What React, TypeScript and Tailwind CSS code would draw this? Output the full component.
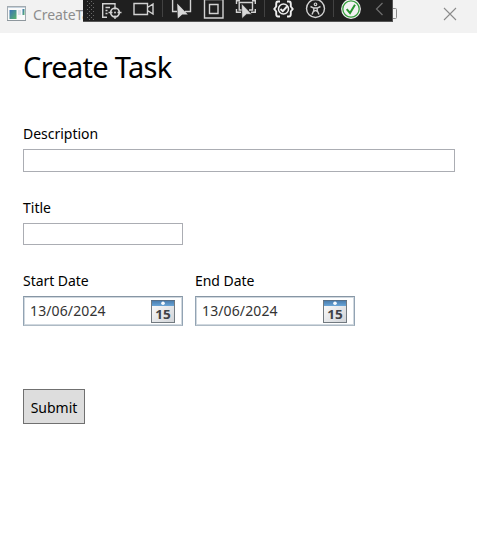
import React from "react";

const stroke = { fill: "none", stroke: "#d2d2d2", strokeWidth: 1.4 };

function Grip() {
  const dots: React.ReactNode[] = [];
  for (let row = 0; row < 5; row++) {
    for (let col = 0; col < 2; col++) {
      dots.push(
        <rect key={`a${row}-${col}`} x={col * 4} y={row * 4 + 1} width="1" height="1" fill="#6a6a6a" />,
        <rect key={`b${row}-${col}`} x={col * 4 + 2} y={row * 4 + 3} width="1" height="1" fill="#6a6a6a" />,
      );
    }
  }
  return <svg className="ml-1 mr-[3px] h-[22px] w-2 shrink-0" viewBox="0 0 8 22">{dots}</svg>;
}

function Separator() {
  return <span className="h-[17px] w-px shrink-0 self-start bg-[#424242]" />;
}

function TreeTargetIcon() {
  return (
    <svg className="h-[22px] w-6 shrink-0" viewBox="0 0 24 22" {...stroke}>
      <path d="M4.7 18V3M4 3.7H17V5.5M7.5 7.5H12M7.5 10.5H9.5M7.5 13.5H9.5M4 17.3H9" />
      <circle cx="17" cy="12.5" r="4.3" strokeWidth="1.7" />
      <path d="M17 5.5v4M17 15.5v3.5M10.5 12.5h4M19.5 12.5h4" />
      <circle cx="17" cy="12.5" r="1" fill="#d2d2d2" stroke="none" />
    </svg>
  );
}

function CameraIcon() {
  return (
    <svg className="ml-[10px] h-[22px] w-6 shrink-0" viewBox="0 0 24 22" {...stroke}>
      <path d="M2 3.5h13.5v11H2zM15.5 7.5L21 4v10L15.5 10.5" />
    </svg>
  );
}

function PointerIcon() {
  return (
    <svg className="ml-[7px] h-[22px] w-6 shrink-0" viewBox="0 0 24 22" {...stroke}>
      <path d="M7 11.5H2.6V0M20.5 0V11.5H15" />
      <path d="M7.2 3.6L17.8 14.5H12.2L7.8 18.5z" fill="#d8d8d8" stroke="none" />
    </svg>
  );
}

function BoundsIcon() {
  return (
    <svg className="ml-2 h-[22px] w-6 shrink-0" viewBox="0 0 24 22" {...stroke}>
      <path d="M2.5 -.5h18.5v18.5h-18.5zM7.5 4.5h8.5v9h-8.5z" />
    </svg>
  );
}

function FramePointerIcon() {
  return (
    <svg className="ml-2 h-[22px] w-6 shrink-0" viewBox="0 0 24 22" {...stroke}>
      <path d="M2.5 4V.7H6M18 .7h3.3V4M2.5 9v3.2H7M21.3 9v3.2H17M8 10H5.2V2.5H18.5V10H15" />
      <path d="M7.5 3.6L17.8 14.3H12.5L8 18.5z" fill="#d8d8d8" stroke="#1f1f1f" strokeWidth=".5" />
    </svg>
  );
}

function BracesCheckIcon() {
  return (
    <svg className="ml-[7px] h-[22px] w-6 shrink-0" viewBox="0 0 24 22" {...stroke} stroke="#eeeeee">
      <path d="M8 1.5H6Q4.2 1.5 4.2 4V6.5L2.3 9L4.2 11.5V14Q4.2 16.5 6 16.5H8M15 1.5H17Q18.8 1.5 18.8 4V6.5L20.7 9L18.8 11.5V14Q18.8 16.5 17 16.5H15" strokeWidth="1.9" />
      <circle cx="11.5" cy="9" r="5" strokeWidth="1.5" />
      <path d="M8.5 9L10.8 11.2L15 6.5" strokeWidth="1.9" />
    </svg>
  );
}

function AccessibilityIcon() {
  return (
    <svg className="ml-2 h-[22px] w-6 shrink-0" viewBox="0 0 24 22" {...stroke}>
      <circle cx="11.5" cy="8.5" r="9" strokeWidth="1.4" />
      <circle cx="11.5" cy="4.3" r="1.3" strokeWidth="1.2" />
      <path d="M6.5 6.5L9.8 8.1V10.5L8 14.5M16.5 6.5L13.2 8.1V10.5L15 14.5M9.8 8H13.2M9.7 11.5L11.5 10.5L13.3 11.5" strokeWidth="1.4" />
    </svg>
  );
}

function SuccessIcon() {
  return (
    <svg className="ml-[5px] h-[22px] w-6 shrink-0" viewBox="0 0 24 22" fill="none">
      <circle cx="12" cy="9" r="9.9" fill="#f2f2f2" />
      <circle cx="12" cy="9" r="8.2" stroke="#379e3d" strokeWidth="1.3" />
      <path d="M7.7 9.2L11 13L16 4.8" stroke="#27952e" strokeWidth="2" />
    </svg>
  );
}

function DebugToolbar() {
  return (
    <div className="absolute left-[83px] top-0 flex h-[22px] w-[310px] items-start overflow-hidden border-b border-r border-[#555] bg-[#1f1f1f]">
      <Grip />
      <TreeTargetIcon />
      <CameraIcon />
      <span className="w-[6px] shrink-0" />
      <Separator />
      <PointerIcon />
      <BoundsIcon />
      <FramePointerIcon />
      <span className="w-[6px] shrink-0" />
      <Separator />
      <BracesCheckIcon />
      <AccessibilityIcon />
      <span className="w-[5px] shrink-0" />
      <Separator />
      <SuccessIcon />
      <svg className="ml-[11px] h-[22px] w-3 shrink-0" viewBox="0 0 12 22" fill="none" stroke="#707070" strokeWidth="1.2">
        <path d="M8.5 3L2.5 9L8.5 15" />
      </svg>
    </div>
  );
}

function TitleBar() {
  return (
    <header className="relative flex h-[33px] items-start overflow-hidden bg-[#f2f2f2]">
      <svg className="ml-[7px] mt-[6px] h-4 w-[19px] shrink-0" viewBox="0 0 19 16">
        <defs>
          <linearGradient id="appPane" x2="1" y2="1">
            <stop stopColor="#3c72b8" />
            <stop offset="1" stopColor="#58b56a" />
          </linearGradient>
        </defs>
        <rect x=".5" y=".5" width="18" height="14" fill="#fafafa" stroke="#a3abb1" />
        <path d="M1 1.5H18" stroke="#c4d1dc" />
        <rect x="2.5" y="4" width="7" height="9" fill="url(#appPane)" />
        <rect x="11" y="4" width="3" height="5" fill="#dce3ea" />
        <rect x="15.5" y="3" width="2" height="6" fill="url(#appPane)" />
        <path d="M0 14.5H19" stroke="#8e979d" />
      </svg>
      <span className="ml-[7px] mt-[5px] whitespace-nowrap text-[14px] leading-[20px] tracking-[-0.1px] text-[#8d8d8d]">CreateTask</span>
      <svg className="ml-auto mr-[20px] mt-[7px] h-[14px] w-[70px] shrink-0" viewBox="0 0 70 14" fill="none" stroke="#8b8b8b">
        <rect x=".5" y="1.5" width="9" height="10" rx="1" />
        <path d="M57 1L69 13M69 1L57 13" strokeWidth="1.1" />
      </svg>
      <DebugToolbar />
    </header>
  );
}

function CalendarIcon() {
  return (
    <svg className="h-6 w-6" viewBox="0 0 24 24">
      <defs>
        <linearGradient id="calHead" x2="0" y2="1">
          <stop stopColor="#4476a7" />
          <stop offset="1" stopColor="#69a5d7" />
        </linearGradient>
        <linearGradient id="calPage" x2="1" y2="1">
          <stop stopColor="#ffffff" />
          <stop offset="1" stopColor="#d0d3d7" />
        </linearGradient>
      </defs>
      <rect x=".5" y="1.5" width="23" height="22" fill="url(#calPage)" stroke="#727a80" />
      <rect x="1" y="1" width="22" height="6" fill="url(#calHead)" />
      <path d="M0 1.5H24" stroke="#566f88" />
      <circle cx="12" cy="4.3" r="1.8" fill="#f7fbff" />
      <text x="4.2" y="19.5" textLength="15.5" lengthAdjust="spacingAndGlyphs" fill="#3f4347" className="font-['Open_Sans',sans-serif] text-[12px] font-bold">15</text>
    </svg>
  );
}

function DateField({ label, value }: { label: string; value: string }) {
  return (
    <div className="w-[160px]">
      <label className="block h-[25px] text-[14px] leading-[20px] tracking-[-0.05px]">{label}</label>
      <div className="flex h-[30px] items-center justify-between border border-x-[#92a3b3] border-b-[#aebac4] border-t-[#8796a4] pl-[6px] pr-[7px] shadow-[inset_0_0_0_1px_#d0d8df]">
        <span className="text-[14px] leading-[20px] tracking-[0.12px] text-[#333]">{value}</span>
        <CalendarIcon />
      </div>
    </div>
  );
}

export default function App() {
  return (
    <div className="h-[537px] w-[477px] overflow-hidden bg-white font-['Noto_Sans','Open_Sans',sans-serif] text-black">
      <TitleBar />
      <main className="pl-[23px] pr-[22px] pt-[14px]">
        <h1 className="h-[77px] text-[29px] leading-[40px] tracking-[-0.7px]">Create Task</h1>
        <label className="block h-[25px] text-[14px] leading-[20px] tracking-[-0.02px]">Description</label>
        <input className="block h-[23px] w-full border border-[#abadb3] bg-white" />
        <label className="mt-[26px] block h-[25px] text-[14px] leading-[20px]">Title</label>
        <input className="block h-[22px] w-[160px] border border-[#abadb3] bg-white" />
        <div className="mt-[26px] flex gap-3">
          <DateField label="Start Date" value="13/06/2024" />
          <DateField label="End Date" value="13/06/2024" />
        </div>
        <button className="mt-[63px] block h-[35px] w-[62px] border border-[#707070] bg-[#ddd] pt-[2px] text-[14px] leading-[20px]">Submit</button>
      </main>
    </div>
  );
}
